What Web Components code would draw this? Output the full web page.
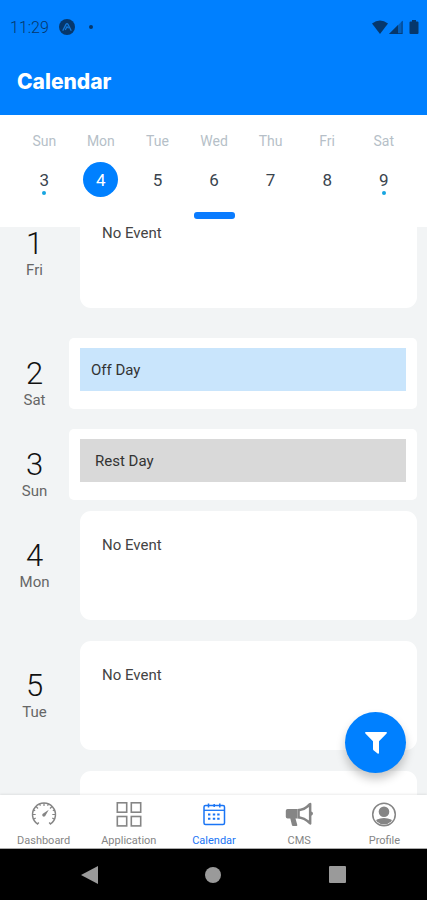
<!DOCTYPE html>
<html lang="en">
<head>
<meta charset="utf-8">
<meta name="viewport" content="width=device-width, initial-scale=1">
<title>Calendar</title>
<style>
  html, body { height: 100%; }
  body { margin: 0; font-family: Roboto, "Liberation Sans", sans-serif; }
</style>
</head>
<body>
<calendar-app></calendar-app>

<script>
function define(name, html, setup) {
  const template = document.createElement('template');
  template.innerHTML = html;
  customElements.define(name, class extends HTMLElement {
    constructor() {
      super();
      this.attachShadow({ mode: 'open' }).append(template.content.cloneNode(true));
    }
    connectedCallback() { if (setup) setup(this, this.shadowRoot); }
  });
}

define('status-bar', `
<style>
  :host { display: flex; align-items: center; height: 54px; padding: 0 8px 0 10px; color: #06376b; font-size: 16px; font-weight: 300; }
  svg { display: block; fill: currentColor; }
  .app { margin-left: 10px; }
  .dot { width: 4px; height: 4px; border-radius: 50%; background: currentColor; margin-left: 14px; }
  .right { display: flex; align-items: center; margin-left: auto; }
  .battery { margin-left: 6px; }
</style>
<span>11:29</span>
<svg class="app" width="16" height="16" viewBox="0 0 16 16"><circle cx="8" cy="8" r="8"/><path d="M4 11.2 7 5.4Q8 3.8 9 5.4l3 5.8M6.5 10.5 8 7.8l1.2 1" fill="none" stroke="#1478d8" stroke-width="1.3" stroke-linecap="round"/></svg>
<span class="dot"></span>
<div class="right">
  <svg width="16" height="14" viewBox="0 0 16 14"><path d="M0 3.4Q8-2.4 16 3.4L8 14z"/></svg>
  <svg width="15" height="14" viewBox="0 0 15 14"><path d="M1 14 14.5.8V14z" opacity=".45"/><path d="M1 14 10 5v9z"/><path d="M13.7 1.8V13.3H9V14h5.500V.8z"/></svg>
  <svg class="battery" width="10" height="14" viewBox="0 0 10 14"><path d="M3 0h4v1.400h1.500Q9.500 1.400 9.500 2.400V13q0 1-1 1h-7q-1 0-1-1V2.400q0-1 1-1H3z"/></svg>
</div>`);

define('app-header', `
<style>
  :host { display: block; background: #0080ff; }
  h1 { margin: 0; padding: 13px 17px 18px; font: 800 21px/30px Inter, "Liberation Sans", sans-serif; color: #fff; }
</style>
<status-bar></status-bar>
<h1><slot></slot></h1>`);

define('week-day', `
<style>
  :host { display: block; flex: 1; }
  button { display: flex; flex-direction: column; align-items: center; width: 100%; padding: 0; border: 0; background: none; font: inherit; }
  .name { font-size: 14px; line-height: 18px; color: #b6bfc8; }
  .num { position: relative; display: grid; place-items: center; width: 35px; height: 35px; margin-top: 12px; border-radius: 50%; font-size: 17px; color: #3a444e; }
  :host([selected]) .num { background: #0080ff; color: #fff; }
  :host([marked]) .num::after { content: ""; position: absolute; left: 50%; bottom: 2px; width: 4px; height: 4px; margin-left: -2px; border-radius: 50%; background: #16a5e0; }
</style>
<button type="button"><span class="name"></span><span class="num"><slot></slot></span></button>`,
(el, root) => { root.querySelector('.name').textContent = el.getAttribute('name'); });

define('week-strip', `
<style>
  :host { display: block; background: #fff; padding: 17px 15px 8px 16px; }
  .days { display: flex; }
  .handle { display: block; width: 41px; height: 7px; margin: 15px auto 0; padding: 0; border: 0; border-radius: 3px; background: #0a7cff; }
</style>
<div class="days"><slot></slot></div>
<button class="handle" type="button" aria-label="Expand calendar"></button>`);

define('day-row', `
<style>
  :host { display: flex; padding: 11px 10px 10px 0; }
  .date { flex: none; width: 69px; padding-top: 28px; text-align: center; }
  .num { font-size: 31px; font-weight: 300; line-height: 34px; color: #111; }
  .name { font-size: 15px; line-height: 18px; color: #666; }
  .card { flex: 1; box-sizing: border-box; height: 109px; margin-left: 11px; padding: 25px 22px; border-radius: 11px; background: #fff; font-size: 15px; line-height: 18px; color: #444; }
  :host([kind]) { padding: 0 10px 0 0; height: 91px; }
  :host([kind]) .date { padding-top: 39px; }
  :host([kind]) .card { height: 71px; margin: 20px 0 0; padding: 10px 11px; border-radius: 5px; color: #333; }
  :host([kind]) .label { height: 43px; line-height: 45px; }
  :host([kind="off"]) .label { padding-left: 11px; background: #c9e5fc; }
  :host([kind="rest"]) .label { padding-left: 15px; background: #d9d9d9; }
</style>
<div class="date"><div class="num"></div><div class="name"></div></div>
<div class="card"><div class="label"><slot></slot></div></div>`,
(el, root) => {
  root.querySelector('.num').textContent = el.getAttribute('num');
  root.querySelector('.name').textContent = el.getAttribute('name');
});

define('agenda-list', `
<style>
  :host { display: block; position: relative; flex: 1; min-height: 0; background: #f2f4f5; }
  .scroll { height: 100%; overflow-y: auto; scrollbar-width: none; }
  .fab { position: absolute; right: 21px; bottom: 22px; display: grid; place-items: center; width: 61px; height: 61px; padding: 0; border: 0; border-radius: 50%; background: #0080ff; box-shadow: 0 6px 10px rgba(0,0,0,.22); }
</style>
<div class="scroll"><slot></slot></div>
<button class="fab" type="button" aria-label="Filter"><svg width="22" height="22" viewBox="0 0 22 22"><path d="M.8 0h20.400q1.200.4.4 1.500L14 9.300V21q-.3 1.200-1.400.5L8.500 18.200Q8 17.800 8 17V9.300L.4 1.500Q-.4.400.8 0z" fill="#fff"/></svg></button>`,
(el, root) => {
  const scroll = root.querySelector('.scroll');
  requestAnimationFrame(() => { scroll.scrollTop = 39; });
});

define('tab-item', `
<style>
  :host { display: block; flex: 1; min-width: 0; color: #858585; }
  :host([active]) { color: #1a75f5; }
  a { display: flex; flex-direction: column; align-items: center; color: inherit; text-decoration: none; font-size: 11px; line-height: 14px; gap: 7px; }
  ::slotted(svg) { display: block; }
</style>
<a href="#"><slot name="icon"></slot><span><slot></slot></span></a>`);

define('tab-bar', `
<style>
  :host { display: flex; position: relative; padding: 6px 0 0 1px; background: #fff; border-bottom: 1px solid #aaa; box-shadow: 0 -1px 2px rgba(0,0,0,.08); }
</style>
<slot></slot>`);

define('system-nav', `
<style>
  :host { display: grid; grid-template-columns: repeat(3, 1fr); height: 51px; padding: 0 28px; background: #000; }
  button { display: grid; place-items: center; padding: 0; border: 0; background: none; }
  svg { fill: #9a9a9a; }
</style>
<button type="button" aria-label="Back"><svg width="17" height="18"><path d="M0 9 17 0v18z"/></svg></button>
<button type="button" aria-label="Home"><svg width="16" height="16"><circle cx="8" cy="8" r="8"/></svg></button>
<button type="button" aria-label="Recent apps"><svg width="17" height="17"><rect width="17" height="17" rx="1"/></svg></button>`);

define('calendar-app', `
<style>
  :host { display: flex; flex-direction: column; height: 100vh; }
</style>
<app-header>Calendar</app-header>
<week-strip>
  <week-day name="Sun" marked>3</week-day>
  <week-day name="Mon" selected>4</week-day>
  <week-day name="Tue">5</week-day>
  <week-day name="Wed">6</week-day>
  <week-day name="Thu">7</week-day>
  <week-day name="Fri">8</week-day>
  <week-day name="Sat" marked>9</week-day>
</week-strip>
<agenda-list>
  <day-row num="1" name="Fri">No Event</day-row>
  <day-row num="2" name="Sat" kind="off">Off Day</day-row>
  <day-row num="3" name="Sun" kind="rest">Rest Day</day-row>
  <day-row num="4" name="Mon">No Event</day-row>
  <day-row num="5" name="Tue">No Event</day-row>
  <day-row num="" name=""></day-row>
</agenda-list>
<tab-bar>
  <tab-item><svg slot="icon" width="26" height="26" viewBox="0 0 26 26" fill="none" stroke="currentColor" stroke-width="1.500"><path d="M6 23.500 7.800 21.600M20 23.500 18.200 21.600M6.500 23A11.500 11.500 0 1 1 19.500 23"/><path d="M13 2v3M1.700 13.500h3M21.300 13.500h3M5 5.500l2 2M21 5.500l-2 2M8.600 2.900l.8 1.800M17.400 2.900l-.8 1.800M2.500 9l1.700.8M23.500 9l-1.700.8M2.700 18l2-.9M23.300 18l-2-.9" stroke-width="1.200"/><path d="m17.800 8.800-5.600 3.600a1.700 1.700 0 1 0 2.300 2.200z" fill="currentColor" stroke="none"/></svg>Dashboard</tab-item>
  <tab-item><svg slot="icon" width="26" height="26" viewBox="0 0 26 26" fill="none" stroke="currentColor" stroke-width="1.600"><rect x="1.300" y="1.800" width="9.400" height="9.400"/><rect x="15.300" y="1.800" width="9.400" height="9.400"/><rect x="1.300" y="15.500" width="9.400" height="9.400"/><rect x="15.300" y="15.500" width="9.400" height="9.400"/></svg>Application</tab-item>
  <tab-item active><svg slot="icon" width="26" height="26" viewBox="0 0 26 26" fill="none" stroke="currentColor" stroke-width="1.500"><rect x="3" y="4.500" width="20.500" height="19" rx="1.500"/><path d="M3 9.300h20.500" stroke-width="1.300"/><path d="M7.500 2.500v4M18.800 2.500v4M13.200 3v3"/><path d="M11.800 13.600h2.400M16.200 13.600h2.400M7 17.700h2.400M11.800 17.700h2.400M16.200 17.700h2.400M7 13.600h2.400" stroke-width="2"/></svg>Calendar</tab-item>
  <tab-item><svg slot="icon" width="28" height="26" viewBox="0 0 28 26" fill="currentColor"><path d="M2.600 8h9.900v9.500h-2l1.800 6.400q.2 1.100-.9 1.100H8q-.9 0-1.100-.9L5.300 17.500H2.600Q.8 17.500.8 15.700V9.800Q.8 8 2.600 8z"/><path fill-rule="evenodd" d="M12.500 8Q19 7.700 24 2.300q2-1.400 2.400.4v7.700q1.600.6 1.600 2.200t-1.600 2.200v7.900q-.5 1.800-2.400.3-5-5.300-11.500-5.500zM14.800 10.300v5q5 .7 9.100 4.300V5.900q-4.100 3.700-9.100 4.400z"/></svg>CMS</tab-item>
  <tab-item><svg slot="icon" width="26" height="26" viewBox="0 0 26 26"><defs><clipPath id="disc"><circle cx="13" cy="13.500" r="10"/></clipPath></defs><circle cx="13" cy="13.500" r="11.300" fill="none" stroke="currentColor" stroke-width="1.500"/><circle cx="13" cy="10.800" r="5.300" fill="currentColor"/><ellipse cx="13" cy="22.500" rx="10" ry="5.500" fill="currentColor" clip-path="url(#disc)"/></svg>Profile</tab-item>
</tab-bar>
<system-nav></system-nav>`);
</script>
</body>
</html>
